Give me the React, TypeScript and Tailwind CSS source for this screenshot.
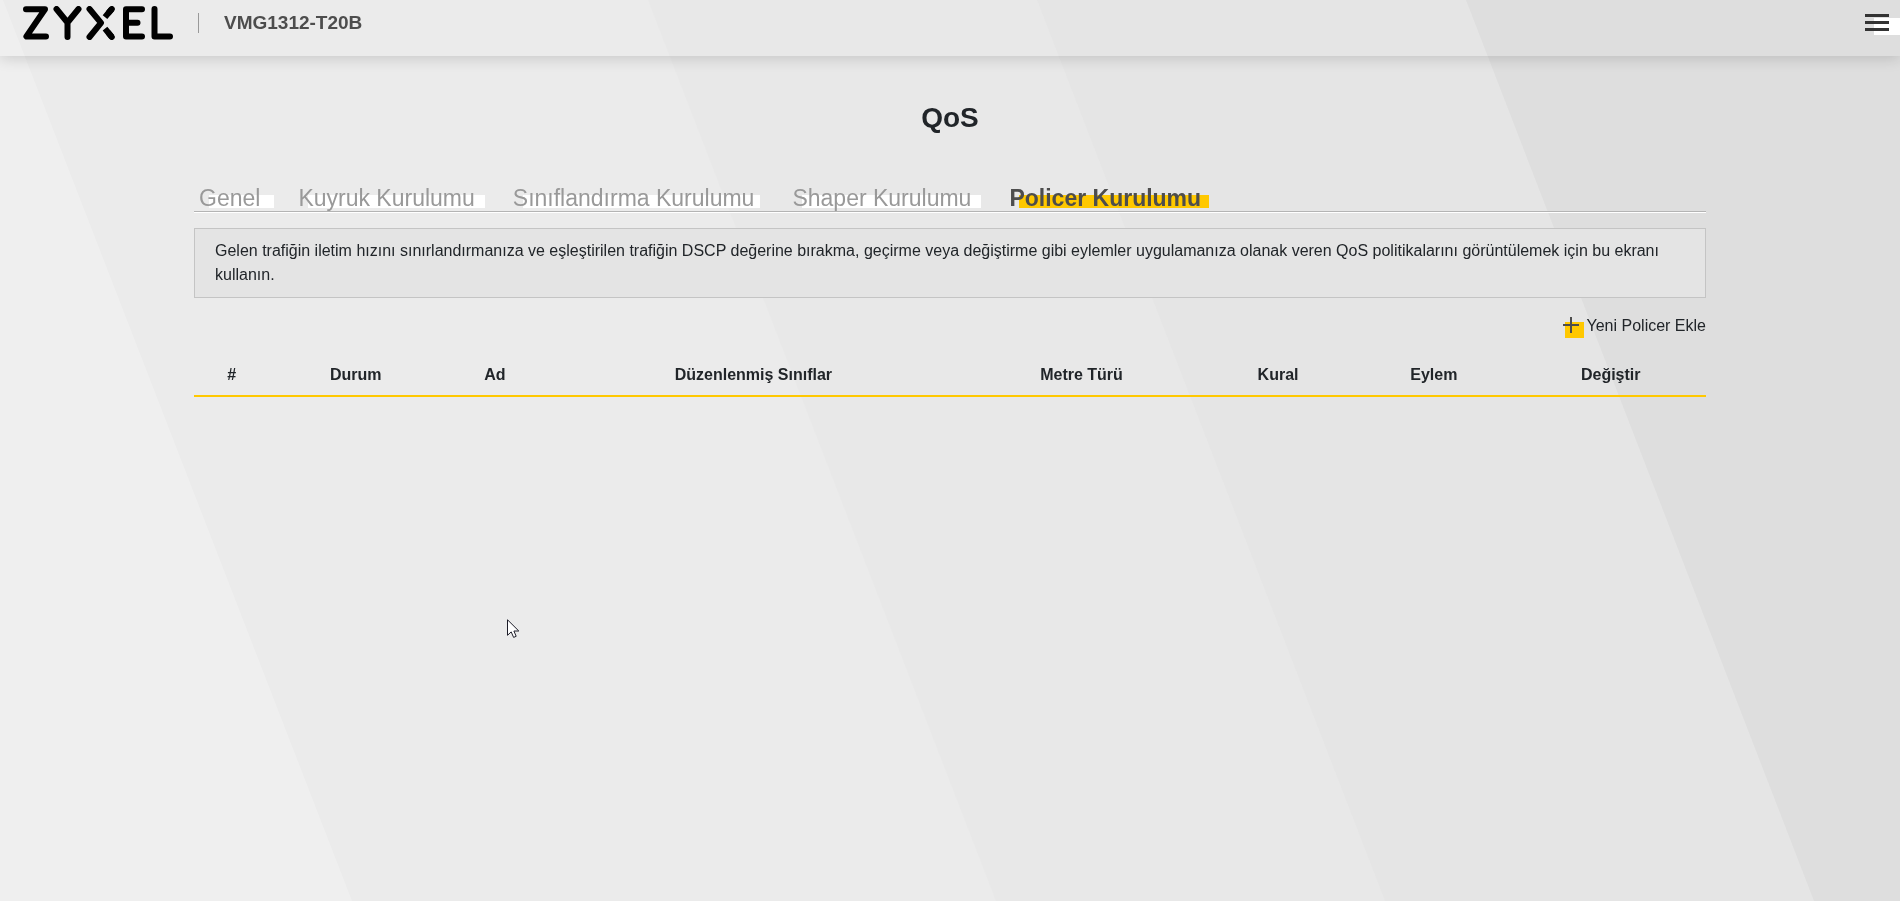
import clsx from 'clsx';

interface Tab {
  label: string;
  active?: boolean;
  markerClass: string;
}

const tabs: Tab[] = [
  { label: 'Genel', markerClass: '-right-3.5' },
  { label: 'Kuyruk Kurulumu', markerClass: '-right-2.5' },
  { label: 'Sınıflandırma Kurulumu', markerClass: '-right-1.5' },
  { label: 'Shaper Kurulumu', markerClass: '-right-2.5' },
  { label: 'Policer Kurulumu', active: true, markerClass: '-right-2' },
];

const columns = [
  { label: '#', width: 'w-[5%]' },
  { label: 'Durum', width: 'w-[11.4%]' },
  { label: 'Ad', width: 'w-[7%]' },
  { label: 'Düzenlenmiş Sınıflar', width: 'w-[27.2%]' },
  { label: 'Metre Türü', width: 'w-[16.2%]' },
  { label: 'Kural', width: 'w-[9.8%]' },
  { label: 'Eylem', width: 'w-[10.8%]' },
  { label: 'Değiştir', width: 'w-[12.6%]' },
];

function Backdrop() {
  return (
    <svg
      className="fixed inset-0 -z-10 h-full w-full"
      viewBox="0 0 1900 901"
      preserveAspectRatio="none"
      aria-hidden="true"
    >
      <rect width="1900" height="901" fill="#efefef" />
      <path d="M3 0H1900V901H352Z" fill="#ebebeb" />
      <path d="M648 0H1900V901H996Z" fill="#e8e8e8" />
      <path d="M1037 0H1900V901H1385Z" fill="#e5e5e5" />
      <path d="M1466 0H1900V901H1814Z" fill="#dedede" />
    </svg>
  );
}

function Logo() {
  return (
    <svg
      className="h-[34px] w-[150px]"
      viewBox="23 6 150 34"
      fill="none"
      stroke="#000"
      strokeWidth="6"
      strokeLinejoin="round"
      role="img"
      aria-label="ZYXEL"
    >
      <g strokeLinecap="round">
        <path d="M26 9.2H45L26.4 36.4H46" />
        <path d="M56.5 9L67.5 22.5L78.5 9M67.5 22.5V37" />
        <path d="M89.5 9L101 22.8L89.5 37" />
        <path d="M142 9.2H126V36.4H142M126 22.8H137.5" />
        <path d="M154.5 9V36.4H170" />
        <path d="M111.8 9L109 12.3M111.8 37L109 33.5" />
      </g>
      <path d="M111.8 9L105 17.1M111.8 37L105 28.7" />
    </svg>
  );
}

function Header() {
  return (
    <header className="flex h-14 items-start shadow-[0_2px_14px_rgba(0,0,0,0.16)]">
      <div className="flex h-[46px] items-center pl-[23px]">
        <Logo />
        <div className="ml-[25px] h-5 w-px bg-[#999]" />
        <span className="ml-[25px] text-[19px] leading-6 font-bold text-[#4d4d4d]">VMG1312-T20B</span>
      </div>
      <button type="button" aria-label="Menu" className="relative mt-3.5 ml-auto h-[21px] w-[35px]">
        <span className="absolute right-0 bottom-0 h-[17px] w-[26px] bg-white" />
        <span className="relative flex h-full flex-col gap-1">
          <span className="h-[3px] w-6 bg-[#333]" />
          <span className="h-[3px] w-6 bg-[#333]" />
          <span className="h-[3px] w-6 bg-[#333]" />
        </span>
      </button>
    </header>
  );
}

function TabLink({ label, active, markerClass }: Tab) {
  return (
    <a
      href="#"
      aria-current={active ? 'page' : undefined}
      className={clsx('relative whitespace-nowrap', active ? 'font-bold text-[#4d4d4d]' : 'text-[#999]')}
    >
      <span className={clsx('absolute bottom-[3px] left-2.5 h-[13px]', markerClass, active ? 'bg-[#ffc800]' : 'bg-white')} />
      <span className="relative">{label}</span>
    </a>
  );
}

function Cursor() {
  return (
    <svg className="pointer-events-none absolute top-[619px] left-[507px] h-[20px] w-[13px]" viewBox="0 0 13 20" aria-hidden="true">
      <path d="M0.5 0.8V16.3L4.2 12.9L6.6 18.4L9.2 17.3L6.9 12H11.8Z" fill="#fff" stroke="#1c1c28" strokeWidth="1" />
    </svg>
  );
}

export default function App() {
  return (
    <div className="min-h-screen font-['Liberation_Sans',Arial,sans-serif] text-base text-[#212529]">
      <Backdrop />
      <Header />
      <main className="mx-auto w-4/5 px-1">
        <h1 className="mt-11 text-center text-[28px] leading-9 font-bold">QoS</h1>

        <nav className="mt-[50px] flex gap-[38px] border-b border-[#b4b4b4] pl-[5px] text-[23px] leading-[25px] shadow-[0_1px_0_#fff]">
          {tabs.map((tab) => (
            <TabLink key={tab.label} {...tab} />
          ))}
        </nav>

        <p className="mt-4 border border-[#c4c4c4] bg-[#e4e4e4] px-5 py-2.5 leading-6">
          Gelen trafiğin iletim hızını sınırlandırmanıza ve eşleştirilen trafiğin DSCP değerine bırakma, geçirme veya
          değiştirme gibi eylemler uygulamanıza olanak veren QoS politikalarını görüntülemek için bu ekranı kullanın.
        </p>

        <div className="mt-4 flex justify-end">
          <button type="button" className="flex items-end gap-[3px] leading-6">
            <svg className="h-[21px] w-[22px]" viewBox="0 0 22 21" aria-hidden="true">
              <path d="M3 5H22V21H3Z" fill="#ffc800" />
              <path d="M1 8H17M9 0V16" stroke="#4d4d4d" strokeWidth="2" />
            </svg>
            Yeni Policer Ekle
          </button>
        </div>

        <table className="mt-3 w-full table-fixed">
          <thead>
            <tr className="border-b-2 border-[#ffc800]">
              {columns.map((column) => (
                <th key={column.label} scope="col" className={clsx('pt-[13px] pb-2 leading-6 font-bold', column.width)}>
                  {column.label}
                </th>
              ))}
            </tr>
          </thead>
          <tbody />
        </table>
      </main>
      <Cursor />
    </div>
  );
}
